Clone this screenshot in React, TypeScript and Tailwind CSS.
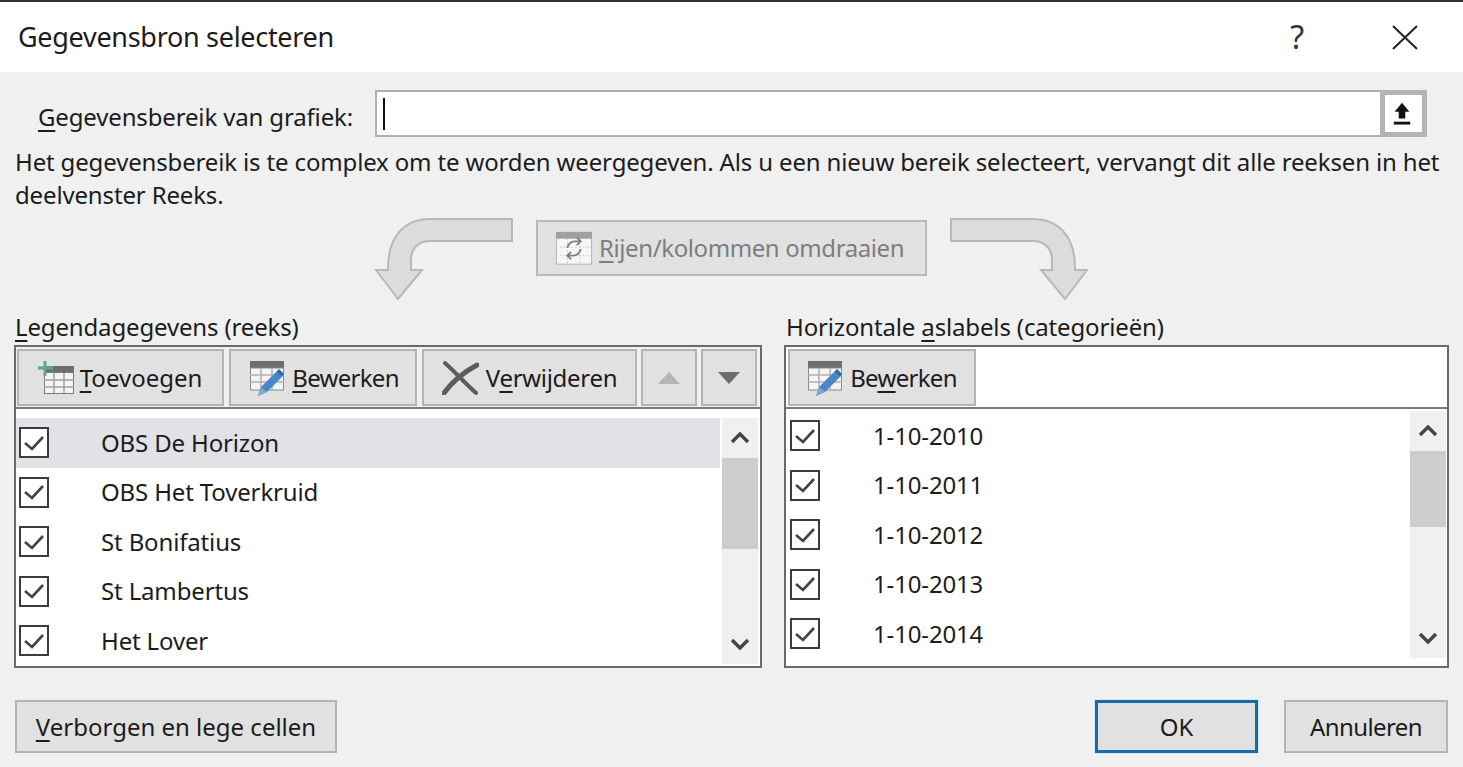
import type { ReactNode } from 'react';

const LEFT_ROWS = ['OBS De Horizon', 'OBS Het Toverkruid', 'St Bonifatius', 'St Lambertus', 'Het Lover'];
const RIGHT_ROWS = ['1-10-2010', '1-10-2011', '1-10-2012', '1-10-2013', '1-10-2014'];

function Check() {
  return (
    <div className="w-[30px] h-[31px] shrink-0 border-[2.5px] border-[#3c3c3c] bg-white flex items-center justify-center">
      <svg width="24" height="20" viewBox="0 0 24 20" fill="none" stroke="#444" strokeWidth="2.6">
        <path d="M3 10l7 6L21 4" />
      </svg>
    </div>
  );
}

function TableIcon() {
  return (
    <svg width="36" height="38" viewBox="0 0 36 38" className="shrink-0">
      <rect x="1" y="2" width="34" height="7" fill="#6e6e6e" />
      <rect x="1.5" y="9" width="33" height="22" fill="#f4f4f4" stroke="#8a8a8a" />
      <path d="M12 9v22M23 9v22M1 16h34M1 23h34" stroke="#b0b0b0" strokeWidth="1.5" />
      <path d="M9 37l3-9L27 13l6 5-15 15z" fill="#4a86c5" />
      <path d="M27 13l3-3 5 5-2 3z" fill="#2f6aa8" />
      <path d="M9 37l3-9 6 5z" fill="#7ba9d8" />
    </svg>
  );
}

function AddIcon() {
  return (
    <svg width="38" height="36" viewBox="0 0 38 36" className="shrink-0">
      <rect x="7" y="6" width="30" height="7" fill="#6e6e6e" />
      <rect x="7.5" y="12.5" width="29" height="21" fill="#f4f4f4" stroke="#7a7a7a" />
      <path d="M17 13v20M27 13v20M7 20h30M7 27h30" stroke="#a0a0a0" strokeWidth="1.5" />
      <path d="M8 1v15M1 8h15" stroke="#5fa595" strokeWidth="3" />
    </svg>
  );
}

function ToolButton({ width, children }: { width: string; children: ReactNode }) {
  return (
    <div className={`${width} h-[57px] shrink-0 bg-[#e1e1e1] border-2 border-[#b4b4b4] flex items-center justify-center`}>
      {children}
    </div>
  );
}

function Scrollbar({ thumb, height }: { thumb: string; height: string }) {
  return (
    <div className={`w-[36px] ${height} shrink-0 bg-[#f0f0f0] flex flex-col`}>
      <div className="h-[40px] shrink-0 flex items-center justify-center">
        <svg width="20" height="12" viewBox="0 0 20 12" fill="none" stroke="#444" strokeWidth="3.4">
          <path d="M2 10l8-8 8 8" />
        </svg>
      </div>
      <div className={`${thumb} shrink-0 bg-[#cdcdcd]`} />
      <div className="flex-1" />
      <div className="h-[40px] shrink-0 flex items-center justify-center">
        <svg width="20" height="12" viewBox="0 0 20 12" fill="none" stroke="#444" strokeWidth="3.4">
          <path d="M2 2l8 8 8-8" />
        </svg>
      </div>
    </div>
  );
}

function BendArrow({ flip }: { flip?: boolean }) {
  return (
    <svg width="138" height="82" viewBox="0 0 138 82" className={flip ? 'shrink-0 -scale-x-100' : 'shrink-0'}>
      <path
        d="M137 1H55C30 1 13 18 13 50V52H1L23 81L47 52H36V42C36 30 44 23 55 23H137Z"
        fill="#dcdcdc"
        stroke="#b8b8b8"
        strokeWidth="2"
      />
    </svg>
  );
}

export default function App() {
  return (
    <div
      className="w-[1463px] h-[767px] overflow-hidden bg-[#f0f0f0] text-[#1c1c1c] text-[24px] tracking-[-0.15px] border-t-2 border-[#2f3033]"
      style={{ fontFamily: "'Noto Sans', 'Open Sans', sans-serif" }}
    >
      <div className="h-[70px] bg-white flex items-center justify-between pl-[18px]">
        <span className="text-[27px] tracking-[-0.3px]">Gegevensbron selecteren</span>
        <div className="flex items-center">
          <span className="text-[32px] text-[#333] mr-[87px]">?</span>
          <svg width="28" height="28" viewBox="0 0 28 28" stroke="#222" strokeWidth="2" className="mr-[44px]">
            <path d="M2 3l24 23M26 3L2 26" />
          </svg>
        </div>
      </div>

      <div className="flex items-center mt-[18px] h-[47px]">
        <span className="pl-[38px] pt-[6px] w-[375px] shrink-0">
          <span className="underline underline-offset-4">G</span>egevensbereik van grafiek:
        </span>
        <div className="w-[1052px] h-[47px] bg-white border-2 border-[#b0b0b0] border-r-0 flex items-center justify-between">
          <div className="w-[2px] h-[32px] ml-[6px] bg-[#111]" />
          <div className="w-[47px] h-[47px] border-[5px] border-[#b4b4b4] bg-white flex items-center justify-center pr-[3px]">
            <svg width="18" height="25" viewBox="0 0 22 28" fill="#111">
              <path d="M11 1L20 12H15V20H7V12H2Z" />
              <rect x="1" y="24" width="20" height="3.5" />
            </svg>
          </div>
        </div>
      </div>

      <div className="mt-[8px] pl-[15px] leading-[33px] whitespace-nowrap">
        Het gegevensbereik is te complex om te worden weergegeven. Als u een nieuw bereik selecteert, vervangt dit alle reeksen in het
        <br />
        deelvenster Reeks.
      </div>

      <div className="mt-[7px] ml-[375px] flex h-[82px]">
        <BendArrow />
        <div className="ml-[23px] mt-[2px] w-[391px] h-[56px] bg-[#e1e1e1] border-2 border-[#b8b8b8] text-[#7d7d7d] flex items-center pl-[17px] gap-[6px]">
          <svg width="38" height="36" viewBox="0 0 40 36" className="shrink-0">
            <rect x="1" y="1" width="38" height="7" fill="#a0a0a0" />
            <rect x="1.5" y="8" width="37" height="27" fill="#f6f6f6" stroke="#b4b4b4" />
            <path d="M13 8v27M26 8v27M1 17h38M1 26h38" stroke="#c4c4c4" strokeDasharray="2 2" />
            <path d="M13 18a8 8 0 0 1 8-7h5M23 7l4 4-4 4M27 19a8 8 0 0 1-8 7h-5M17 30l-4-4 4-4" fill="none" stroke="#808080" strokeWidth="2" />
          </svg>
          <span className="tracking-[-0.4px]">
            <span className="underline underline-offset-4">R</span>ijen/kolommen omdraaien
          </span>
        </div>
        <div className="ml-[23px]">
          <BendArrow flip />
        </div>
      </div>

      <div className="flex mt-[14px]">
        <div className="ml-[14px] w-[748px] shrink-0">
          <div className="h-[31px] pl-[1px] leading-[26px]">
            <span className="underline underline-offset-4">L</span>egendagegevens (reeks)
          </div>
          <div className="h-[323px] border-2 border-[#6a6a6a] bg-white overflow-hidden">
            <div className="h-[62px] border-b-2 border-[#7a7a7a] bg-[#f0f0f0] pl-[1px] pt-[2px] flex gap-[5px]">
              <ToolButton width="w-[207px]">
                <div className="flex items-center gap-[5px] pr-[2px]">
                  <AddIcon />
                  <span className="tracking-normal">
                    <span className="underline underline-offset-4">T</span>oevoegen
                  </span>
                </div>
              </ToolButton>
              <ToolButton width="w-[188px]">
                <div className="flex items-center gap-[7px] pl-[2px]">
                  <TableIcon />
                  <span className="tracking-[-0.7px]">
                    <span className="underline underline-offset-4">B</span>ewerken
                  </span>
                </div>
              </ToolButton>
              <ToolButton width="w-[215px]">
                <div className="flex items-center gap-[7px]">
                  <svg width="37" height="35" viewBox="0 0 37 35" fill="none" stroke="#5c5c5c" strokeLinecap="round" className="shrink-0">
                    <path d="M3 3C13 12 24 24 34 33" strokeWidth="4" />
                    <path d="M35 5C22 12 10 22 2 33" strokeWidth="5" />
                  </svg>
                  <span className="tracking-[-0.3px]">
                    V<span className="underline underline-offset-4">e</span>rwijderen
                  </span>
                </div>
              </ToolButton>
              <ToolButton width="w-[56px] -ml-[1px]">
                <svg width="24" height="14" viewBox="0 0 24 14" fill="#b5b5b5">
                  <path d="M12 1L23 13H1Z" />
                </svg>
              </ToolButton>
              <ToolButton width="w-[56px] -ml-[1px]">
                <svg width="24" height="14" viewBox="0 0 24 14" fill="#6c6c6c">
                  <path d="M1 1H23L12 13Z" />
                </svg>
              </ToolButton>
            </div>
            <div className="flex pt-[9px]">
              <div className="w-[704px] shrink-0">
                {LEFT_ROWS.map((row, i) => (
                  <div key={row} className={`h-[49.5px] pl-[3px] flex items-center ${i === 0 ? 'bg-[#e1e1e6]' : ''}`}>
                    <Check />
                    <span className="ml-[52px]">{row}</span>
                  </div>
                ))}
              </div>
              <div className="ml-[2px]">
                <Scrollbar thumb="h-[91px]" height="h-[246px]" />
              </div>
            </div>
          </div>
        </div>

        <div className="ml-[22px] w-[665px] shrink-0">
          <div className="h-[31px] pl-[2px] leading-[26px]">
            Horizontale <span className="underline underline-offset-4">a</span>slabels (categorieën)
          </div>
          <div className="h-[323px] border-2 border-[#6a6a6a] bg-white overflow-hidden">
            <div className="h-[62px] border-b-2 border-[#7a7a7a] pl-[2px] pt-[2px]">
              <ToolButton width="w-[188px]">
                <div className="flex items-center gap-[7px]">
                  <TableIcon />
                  <span className="tracking-[-0.7px]">
                    Be<span className="underline underline-offset-4">w</span>erken
                  </span>
                </div>
              </ToolButton>
            </div>
            <div className="flex pt-[2px]">
              <div className="w-[624px] shrink-0">
                {RIGHT_ROWS.map((row) => (
                  <div key={row} className="h-[49.5px] pl-[4px] flex items-center">
                    <Check />
                    <span className="ml-[53px]">{row}</span>
                  </div>
                ))}
              </div>
              <Scrollbar thumb="h-[76px]" height="h-[247px]" />
            </div>
          </div>
        </div>
      </div>

      <div className="flex mt-[32px] pl-[15px]">
        <div className="w-[322px] h-[53px] bg-[#e1e1e1] border-2 border-[#b4b4b4] flex items-center justify-center">
          <span className="tracking-normal">
            <span className="underline underline-offset-4">V</span>erborgen en lege cellen
          </span>
        </div>
        <div className="ml-[758px] w-[163px] h-[53px] bg-[#e1e1e1] border-[3px] border-[#1c6aa5] shadow-[0_0_0_1px_#cde8f5] flex items-center justify-center">
          OK
        </div>
        <div className="ml-[26px] w-[164px] h-[53px] bg-[#e1e1e1] border-2 border-[#b4b4b4] flex items-center justify-center tracking-[-0.6px]">
          Annuleren
        </div>
      </div>
    </div>
  );
}
